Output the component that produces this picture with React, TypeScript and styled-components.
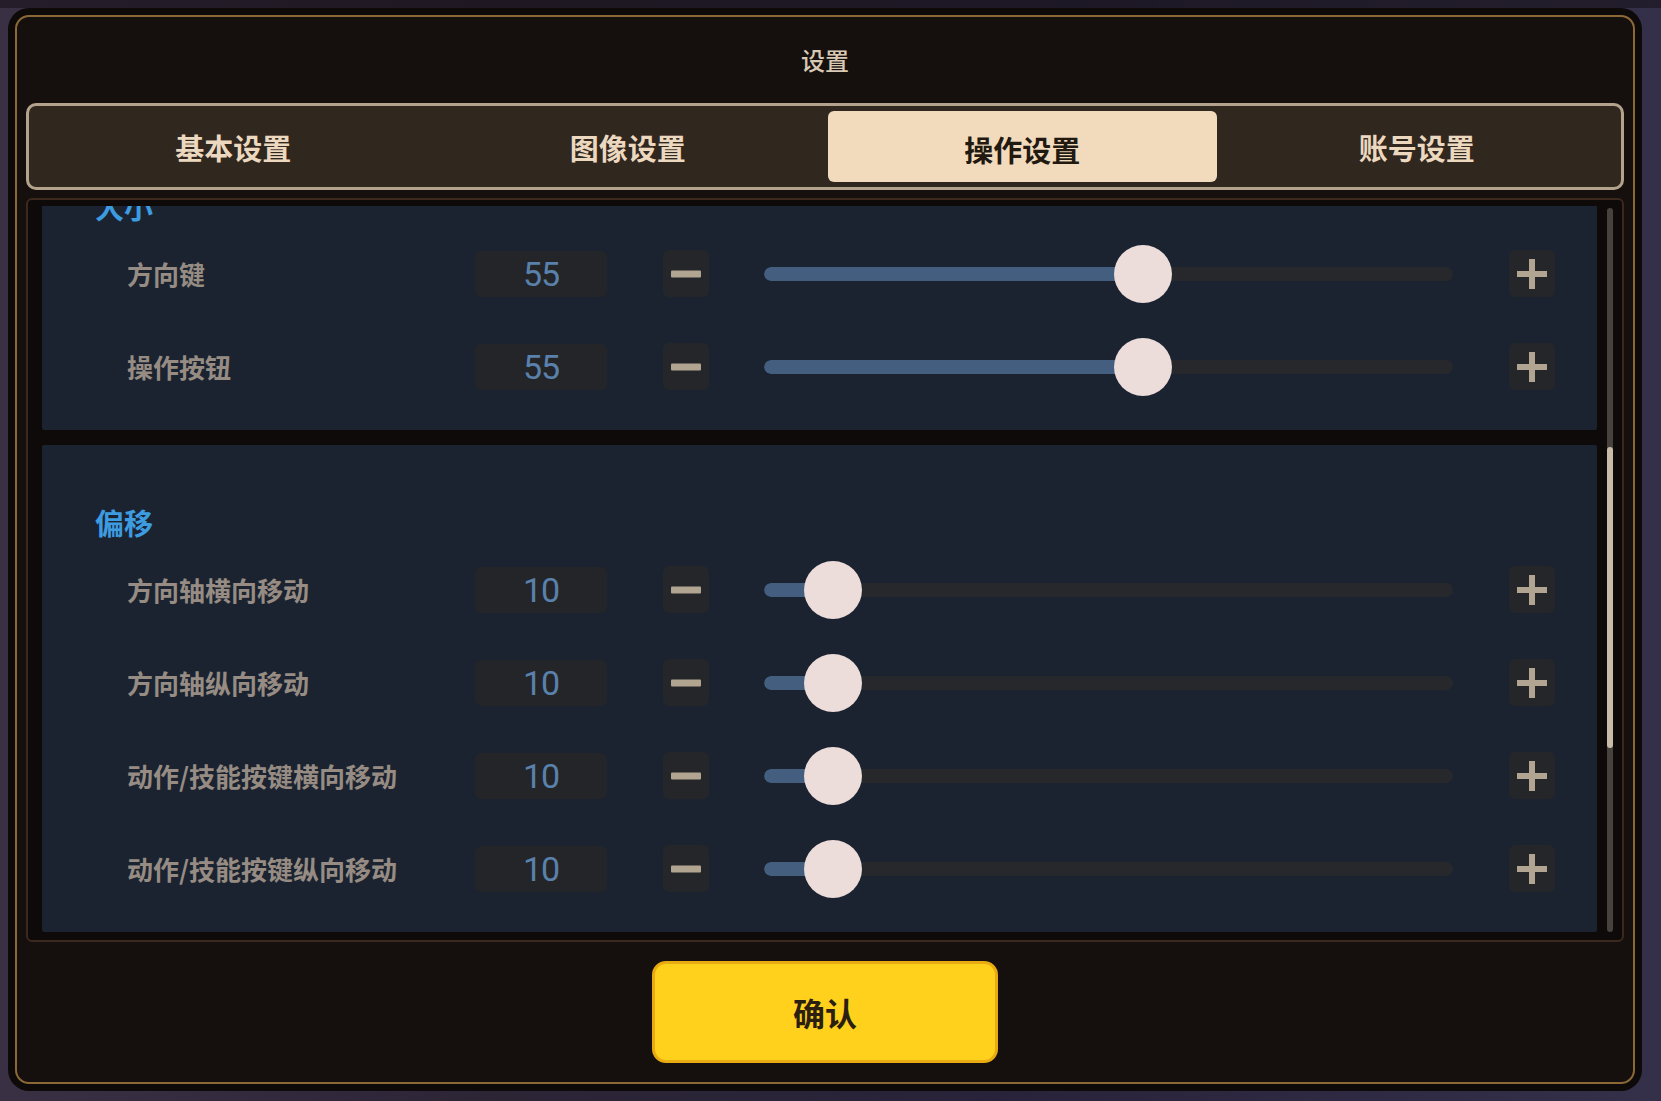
import React, { useLayoutEffect, useRef } from "react";
import styled, { createGlobalStyle } from "styled-components";

const GlobalStyle = createGlobalStyle`
  * { box-sizing: border-box; }
  html, body { margin: 0; padding: 0; }
  body {
    width: 1661px;
    height: 1101px;
    overflow: hidden;
    font-family: "Noto Sans CJK SC", "Noto Sans", sans-serif;
    background:
      linear-gradient(180deg, rgba(20,14,20,0.55) 0px, rgba(20,14,20,0.55) 8px, transparent 8px),
      linear-gradient(90deg, #3a3044 0%, #2c2536 30%, #28233a 60%, #35304a 100%);
  }
`;

const Page = styled.div`
  width: 1661px;
  height: 1101px;
  padding: 15px 0 0 15px;
  display: flex;
  align-items: flex-start;
`;

const Modal = styled.div`
  width: 1620px;
  height: 1069px;
  display: flex;
  flex-direction: column;
  padding: 0 9px;
  background: #150f0e;
  border: 2px solid #8a6936;
  border-radius: 14px;
  box-shadow: 0 0 0 7px #0e0a09;
`;

const Header = styled.div`
  height: 86px;
  flex: 0 0 86px;
  display: flex;
  align-items: center;
  justify-content: center;
`;

const Title = styled.h1`
  margin: 0;
  font-size: 24px;
  font-weight: 500;
  color: #d8c9b3;
  line-height: 1;
`;

const TabBar = styled.div`
  height: 87px;
  flex: 0 0 87px;
  display: grid;
  grid-template-columns: repeat(4, 1fr);
  gap: 6px;
  padding: 5px 10px;
  background: #30271f;
  border: 3px solid #b4a38c;
  border-radius: 10px;
`;

const Tab = styled.button<{ $active?: boolean }>`
  border: none;
  border-radius: 6px;
  background: ${(p) => (p.$active ? "#f2dbbd" : "transparent")};
  color: ${(p) => (p.$active ? "#221911" : "#ebd8bf")};
  font-family: "Noto Sans CJK SC", sans-serif;
  font-size: 29px;
  font-weight: 700;
  padding: ${(p) => (p.$active ? "4px 0 0" : "0")};
  cursor: pointer;
`;

const ContentFrame = styled.div`
  margin-top: 8px;
  height: 744px;
  flex: 0 0 744px;
  display: flex;
  padding: 6px 9px 8px 14px;
  background: #0e0a09;
  border: 2px solid #3d281d;
  border-radius: 6px;
`;

const Viewport = styled.div`
  flex: 1;
  overflow: hidden;
  display: flex;
  flex-direction: column;
  gap: 15px;
`;

const Section = styled.section`
  flex: 0 0 auto;
  background: #1b2330;
  border-radius: 2px;
  padding: 0 42px 17px 53px;
`;

const SectionTitle = styled.h2`
  margin: 0;
  height: 98px;
  padding-top: 62px;
  font-size: 29px;
  line-height: 30px;
  font-weight: 700;
  color: #3d9be0;
`;

const Row = styled.div`
  height: 93px;
  display: flex;
  align-items: center;
  padding-left: 32px;
`;

const Label = styled.span`
  flex: 0 0 348px;
  font-size: 26px;
  font-weight: 700;
  color: #968c83;
`;

const ValueBox = styled.div`
  flex: 0 0 132px;
  height: 46px;
  margin-right: 56px;
  display: flex;
  align-items: center;
  justify-content: center;
  background: #232528;
  border-radius: 6px;
  font-family: "Roboto", "Liberation Sans", sans-serif;
  font-size: 34px;
  letter-spacing: -1px;
  color: #5a80ac;
`;

const StepButton = styled.button<{ $gap?: number }>`
  flex: 0 0 46px;
  height: 47px;
  padding: 0;
  margin-right: ${(p) => p.$gap ?? 0}px;
  display: flex;
  align-items: center;
  justify-content: center;
  background: #242629;
  border: none;
  border-radius: 6px;
  cursor: pointer;
`;

const Slider = styled.div`
  flex: 1;
  height: 58px;
  margin-right: 56px;
  position: relative;
  display: flex;
  align-items: center;
`;

const Rail = styled.div`
  width: 100%;
  height: 14px;
  border-radius: 7px;
  background: #26282b;
  overflow: hidden;
`;

const Fill = styled.div`
  height: 100%;
  background: #445e80;
  border-radius: 7px 0 0 7px;
`;

const Thumb = styled.div`
  position: absolute;
  top: 0;
  width: 58px;
  height: 58px;
  border-radius: 50%;
  background: #ecdcda;
`;

const ScrollTrack = styled.div`
  flex: 0 0 6px;
  margin-left: 10px;
  margin-top: 2px;
  background: #47423d;
  border-radius: 3px;
  display: flex;
  flex-direction: column;
`;

const ScrollThumb = styled.div<{ $offset: number; $size: number }>`
  margin-top: ${(p) => p.$offset}px;
  height: ${(p) => p.$size}px;
  background: #c8bba7;
  border-radius: 3px;
`;

const Footer = styled.div`
  flex: 1;
  display: flex;
  align-items: center;
  justify-content: center;
`;

const ConfirmButton = styled.button`
  width: 346px;
  height: 102px;
  background: #ffd11c;
  border: 3px solid #e8ab12;
  border-radius: 14px;
  font-family: "Noto Sans CJK SC", sans-serif;
  font-size: 32px;
  font-weight: 700;
  color: #2a1f10;
  cursor: pointer;
`;

const MinusIcon = () => (
  <svg width="30" height="8" viewBox="0 0 30 8">
    <rect x="0" y="0.5" width="30" height="7" rx="1" fill="#b1a491" />
  </svg>
);

const PlusIcon = () => (
  <svg width="30" height="30" viewBox="0 0 30 30">
    <rect x="0" y="12" width="30" height="6" fill="#b1a491" />
    <rect x="12" y="0" width="6" height="30" fill="#b1a491" />
  </svg>
);

type Setting = { label: string; value: number };

const SettingRow = ({ label, value }: Setting) => {
  const pct = value;
  return (
    <Row>
      <Label>{label}</Label>
      <ValueBox>{value}</ValueBox>
      <StepButton $gap={55} aria-label="减少">
        <MinusIcon />
      </StepButton>
      <Slider>
        <Rail>
          <Fill style={{ width: `${pct}%` }} />
        </Rail>
        <Thumb style={{ left: `calc(${pct}% - 29px)` }} />
      </Slider>
      <StepButton aria-label="增加">
        <PlusIcon />
      </StepButton>
    </Row>
  );
};

const sizeSettings: Setting[] = [
  { label: "方向键", value: 55 },
  { label: "操作按钮", value: 55 },
];

const offsetSettings: Setting[] = [
  { label: "方向轴横向移动", value: 10 },
  { label: "方向轴纵向移动", value: 10 },
  { label: "动作/技能按键横向移动", value: 10 },
  { label: "动作/技能按键纵向移动", value: 10 },
];

const tabs = ["基本设置", "图像设置", "操作设置", "账号设置"];

export default function App() {
  const viewRef = useRef<HTMLDivElement>(null);
  useLayoutEffect(() => {
    if (viewRef.current) viewRef.current.scrollTop = 80;
  }, []);

  return (
    <>
      <GlobalStyle />
      <Page>
        <Modal>
          <Header>
            <Title>设置</Title>
          </Header>
          <TabBar>
            {tabs.map((t, i) => (
              <Tab key={t} $active={i === 2}>
                {t}
              </Tab>
            ))}
          </TabBar>
          <ContentFrame>
            <Viewport ref={viewRef}>
              <Section>
                <SectionTitle>大小</SectionTitle>
                {sizeSettings.map((s) => (
                  <SettingRow key={s.label} {...s} />
                ))}
              </Section>
              <Section>
                <SectionTitle>偏移</SectionTitle>
                {offsetSettings.map((s) => (
                  <SettingRow key={s.label} {...s} />
                ))}
              </Section>
            </Viewport>
            <ScrollTrack>
              <ScrollThumb $offset={239} $size={301} />
            </ScrollTrack>
          </ContentFrame>
          <Footer>
            <ConfirmButton>确认</ConfirmButton>
          </Footer>
        </Modal>
      </Page>
    </>
  );
}
